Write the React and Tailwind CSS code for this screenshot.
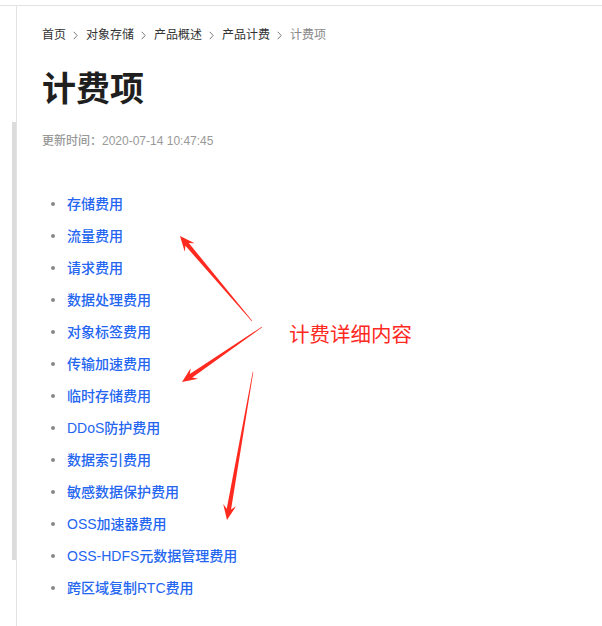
const crumbs = ['首页', '对象存储', '产品概述', '产品计费'];

const items = [
  '存储费用',
  '流量费用',
  '请求费用',
  '数据处理费用',
  '对象标签费用',
  '传输加速费用',
  '临时存储费用',
  'DDoS防护费用',
  '数据索引费用',
  '敏感数据保护费用',
  'OSS加速器费用',
  'OSS-HDFS元数据管理费用',
  '跨区域复制RTC费用',
];

// tail -> head, in page pixels
const arrows = [
  { tail: [252, 321], head: [180, 236] },
  { tail: [262, 327], head: [182, 382] },
  { tail: [253, 372], head: [227, 520] },
];

const arrowPoints = ({ tail, head }) => {
  const dx = head[0] - tail[0];
  const dy = head[1] - tail[1];
  const len = Math.hypot(dx, dy);
  const d = [dx / len, dy / len];
  const n = [-d[1], d[0]];
  const at = (back, side) => [
    head[0] - d[0] * back + n[0] * side,
    head[1] - d[1] * back + n[1] * side,
  ];
  const pts = [
    [tail[0] + n[0] * 0.3, tail[1] + n[1] * 0.3],
    at(11, 2.2),
    at(15, 6.5),
    head,
    at(15, -6.5),
    at(11, -2.2),
    [tail[0] - n[0] * 0.3, tail[1] - n[1] * 0.3],
  ];
  return pts.map((p) => p.join(',')).join(' ');
};

const Chevron = () => (
  <svg width="5" height="9" viewBox="0 0 5 9" className="ml-[7px] mr-[8px] shrink-0">
    <path d="M0.7 0.8 L4.2 4.5 L0.7 8.2" fill="none" stroke="#777" strokeWidth="1" />
  </svg>
);

export default function App() {
  return (
    <div
      className="relative h-[626px] w-full overflow-hidden bg-white pt-[5px]"
      style={{ fontFamily: '"Liberation Sans", "Noto Sans CJK SC", sans-serif' }}
    >
      <div className="flex h-full border-t border-[#e3e3e3]">
        {/* left rail with scroll thumb */}
        <div className="w-[16px] shrink-0">
          <div className="ml-[12px] mt-[116px] h-[438px] w-[4px] bg-[#dcdcdc]" />
        </div>

        <div className="flex-1 border-l border-[#e3e3e3] pl-[25px]">
          {/* breadcrumb */}
          <div className="mt-[20px] flex items-center text-[12px] leading-[18px] text-[#333]">
            {crumbs.map((c) => (
              <span key={c} className="flex items-center">
                <span>{c}</span>
                <Chevron />
              </span>
            ))}
            <span className="text-[#888]">计费项</span>
          </div>

          <h1 className="mt-[25px] text-[34px] font-bold leading-[41px] text-[#1f1f1f]">计费项</h1>

          <div className="mt-[22px] text-[12px] font-medium leading-[18px] text-[#999]">
            更新时间：2020-07-14 10:47:45
          </div>

          <ul className="mt-[38px]">
            {items.map((it) => (
              <li key={it} className="flex h-[32px] items-center">
                <span className="ml-[9px] mr-[12px] h-[4px] w-[4px] rounded-full bg-[#888]" />
                <a className="text-[14px] font-medium text-[#2466f0]">{it}</a>
              </li>
            ))}
          </ul>
        </div>
      </div>

      {/* annotation overlay */}
      <svg className="pointer-events-none absolute left-0 top-0" width="602" height="626">
        {arrows.map((a, i) => (
          <polygon key={i} points={arrowPoints(a)} fill="#ff2a1f" />
        ))}
      </svg>
      <div className="absolute left-[289px] top-[322px] text-[20.5px] leading-[26px] text-[#ff2a1f]">
        计费详细内容
      </div>
    </div>
  );
}
